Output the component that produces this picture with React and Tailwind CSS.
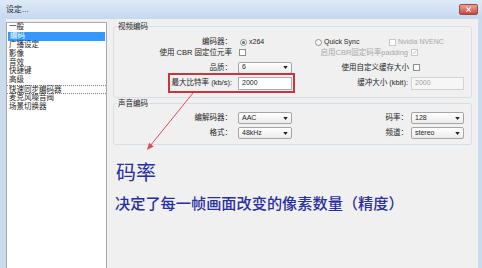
import React from "react";

const items = ["一般", "编码", "广播设定", "影像", "音效", "快捷键", "高级", "快速同步编码器", "麦克风噪音阀", "场景切换器"];

function Check({ checked, disabled }) {
  return (
    <span className={`flex h-[7px] w-[7px] items-center justify-center border bg-white ${disabled ? "border-[#c8c8c8]" : "border-[#8e8f8f]"}`}>
      {checked && (
        <svg viewBox="0 0 8 8" className="h-[5px] w-[5px]">
          <path d="M1 4 L3 6 L7 1" fill="none" stroke={disabled ? "#b0b0b0" : "#333"} strokeWidth="1.3" />
        </svg>
      )}
    </span>
  );
}

function Radio({ on }) {
  return (
    <span className="flex h-[7px] w-[7px] items-center justify-center rounded-full border border-[#8e8f8f] bg-white">
      {on && <span className="h-[3px] w-[3px] rounded-full bg-[#3b7d6c]" />}
    </span>
  );
}

function Select({ value, className }) {
  return (
    <div className={`flex h-[12px] items-center justify-between rounded-[2px] border border-[#a5a5a5] bg-linear-to-b from-white to-[#ececec] px-[3px] text-[7px] ${className}`}>
      <span>{value}</span>
      <svg viewBox="0 0 6 4" className="h-[3px] w-[5px]">
        <path d="M0 0 H6 L3 4 Z" fill="#222" />
      </svg>
    </div>
  );
}

function Input({ value, disabled, className }) {
  return (
    <div className={`flex h-[13px] items-center border pl-[3px] text-[7px] ${disabled ? "border-[#d2d2d2] bg-[#f6f6f6] text-[#a0a0a0]" : "border-[#abadb3] bg-white"} ${className}`}>
      {value}
    </div>
  );
}

export default function App() {
  return (
    <div className="relative flex h-[268px] w-[482px] flex-col overflow-hidden whitespace-nowrap bg-[#cbdbee] font-['Liberation_Sans','Noto_Sans_CJK_SC',sans-serif] text-[7.5px] text-[#1e1e1e]">
      {/* title bar */}
      <div className="flex h-[19px] items-center justify-between bg-linear-to-b from-[#dfeaf7] to-[#c5d8ee] pl-[6px] pr-[4px]">
        <span className="text-[8px] text-[#2a2a2a]">设定...</span>
        <div className="flex h-[11px] w-[19px] items-center justify-center rounded-[2px] border border-[#9a4a44] bg-linear-to-b from-[#e9a497] to-[#c7473b]">
          <svg viewBox="0 0 8 6" className="h-[5px] w-[7px]">
            <path d="M1.5 0.5 L6.5 5.5 M6.5 0.5 L1.5 5.5" stroke="white" strokeWidth="1.4" />
          </svg>
        </div>
      </div>

      {/* client */}
      <div className="ml-[6px] mr-[4px] flex flex-1 bg-[#f0f0f0]">
        <div className="mt-[3px] flex w-[101px] flex-col border border-b-0 border-[#a3aab3] bg-white">
          {items.map((t, i) => (
            <div
              key={t}
              className={`h-[8.9px] pl-[2px] leading-[8.9px] ${i === 1 ? "mx-[1px] bg-[#3399ff] text-white" : ""} ${i === 7 ? "border-y border-dotted border-[#888]" : ""}`}
            >
              {t}
            </div>
          ))}
        </div>

        <div className="flex flex-1 flex-col px-[6px] pt-[3px]">
          <fieldset className="rounded-[3px] border border-[#d5dfe5] pb-[4px]">
            <legend className="ml-[3px] px-[1px] leading-[9px]">视频编码</legend>

            <div className="mt-[7px] flex h-[8px] items-center">
              <span className="w-[118px] text-right">编码器：</span>
              <div className="ml-[8px] flex w-[75px] items-center gap-[2px]">
                <Radio on />
                <span className="text-[7px]">x264</span>
              </div>
              <div className="flex w-[74px] items-center gap-[2px]">
                <Radio />
                <span className="text-[7px]">Quick Sync</span>
              </div>
              <div className="flex items-center gap-[2px] text-[#a8a8a8]">
                <Check disabled />
                <span className="text-[7px]">Nvidia NVENC</span>
              </div>
            </div>

            <div className="mt-[2px] flex h-[9px] items-center">
              <span className="w-[118px] text-right">使用 CBR 固定位元率</span>
              <span className="ml-[7px]">
                <Check />
              </span>
              <span className="w-[162px] text-right text-[#a8a8a8]">启用CBR固定码率padding</span>
              <span className="ml-[3px]">
                <Check checked disabled />
              </span>
            </div>

            <div className="mt-[5px] flex h-[11px] items-center">
              <span className="w-[118px] text-right">品质：</span>
              <Select value="6" className="ml-[6px] w-[54px]" />
              <span className="w-[117px] text-right">使用自定义缓存大小</span>
              <span className="ml-[4px]">
                <Check />
              </span>
            </div>

            <div className="flex items-center">
              <div className="ml-[54px] flex items-center border-2 border-[#c9353f] py-[1.5px] pr-[1px]">
                <span className="w-[62px] text-right">最大比特率 (kb/s):</span>
                <Input value="2000" className="ml-[6px] w-[54px]" />
              </div>
              <span className="w-[113px] text-right">缓冲大小 (kbit):</span>
              <Input value="2000" disabled className="ml-[3px] w-[53px]" />
            </div>
          </fieldset>

          <fieldset className="mt-[1px] rounded-[3px] border border-[#d5dfe5] pb-[5px]">
            <legend className="ml-[3px] px-[1px] leading-[9px]">声音编码</legend>

            <div className="mt-[4px] flex h-[12px] items-center">
              <span className="w-[118px] text-right">编解码器：</span>
              <Select value="AAC" className="ml-[6px] w-[54px]" />
              <span className="w-[116px] text-right">码率：</span>
              <Select value="128" className="ml-[3px] w-[53px]" />
            </div>

            <div className="mt-[3px] flex h-[12px] items-center">
              <span className="w-[118px] text-right">格式：</span>
              <Select value="48kHz" className="ml-[6px] w-[54px]" />
              <span className="w-[116px] text-right">频道：</span>
              <Select value="stereo" className="ml-[3px] w-[53px]" />
            </div>
          </fieldset>

          <div className="mt-[15px] pl-[3px] font-['Noto_Sans_CJK_SC',sans-serif] text-[20px] leading-[24px] text-[#2a2ea0]">码率</div>
          <div className="mt-[8px] pl-[2px] font-['Noto_Sans_CJK_SC',sans-serif] text-[15.2px] font-medium leading-[20px] text-[#2a2ea0]">
            决定了每一帧画面改变的像素数量（精度）
          </div>
        </div>
      </div>

      {/* annotation arrow */}
      <svg className="pointer-events-none absolute left-0 top-0 h-[268px] w-[482px]" viewBox="0 0 482 268">
        <line x1="193" y1="93" x2="150" y2="146" stroke="#d4505a" strokeWidth="1" />
        <polygon points="147,150 153.7,146.4 149.1,142.7" fill="#d4505a" />
      </svg>
    </div>
  );
}
